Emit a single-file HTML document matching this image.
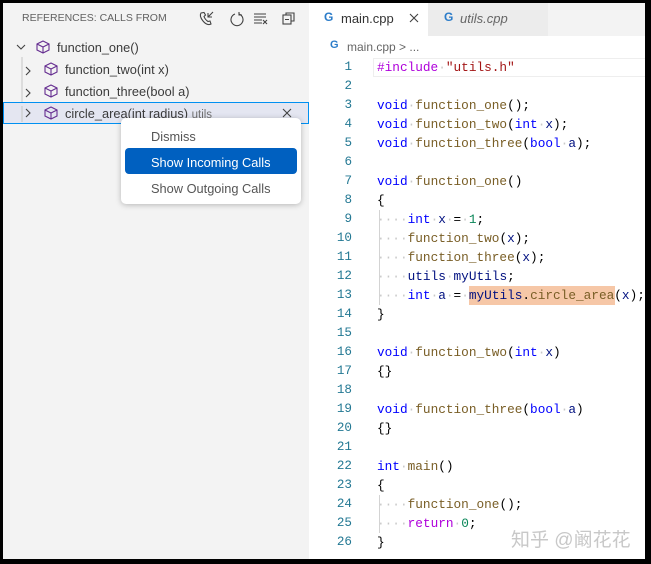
<!DOCTYPE html>
<html><head><meta charset="utf-8"><style>
*{margin:0;padding:0;box-sizing:border-box}
body{width:651px;height:564px;background:#000;position:relative;overflow:hidden;font-family:"Liberation Sans","Noto Sans CJK SC",sans-serif}
#side{position:absolute;left:3px;top:3px;width:306px;height:556px;background:#f3f3f3}
#ed{position:absolute;left:309px;top:3px;width:336px;height:556px;background:#fff}
.t{position:absolute;font-size:12.5px;color:#3b3b3b;white-space:nowrap}
.code{position:absolute;font-family:"Liberation Mono",monospace;font-size:12.75px;white-space:pre;color:#000;line-height:19px}
.ln{position:absolute;left:310px;width:42px;text-align:right;font-family:"Liberation Mono",monospace;font-size:12.6px;color:#237893;line-height:19px}
.k{color:#0000ff}.f{color:#795e26}.v{color:#001080}.s{color:#a31515}.p{color:#af00db}.n{color:#098658}.d{color:#c8c8c8}
svg{position:absolute}
</style></head><body>
<div id="side"></div>
<div id="ed"></div>
<div class="t" style="left:22px;top:12px;font-size:10.5px;color:#616161">REFERENCES: CALLS FROM</div>
<svg style="left:198px;top:10px" width="100" height="18" fill="none" stroke="#424242" stroke-width="1.1">
<path d="M3 3 q-2 3 2 8 q4 5 8 3 l-1-3 -2 0.5 q-3-2 -4-5 l1.5-1.5 -1.5-2.5z"/><path d="M15 2 l-5 5 M10 3 v4 h4"/>
<path d="M37 4 a6 6 0 1 0 4 0 M41 2 v3 h3"/>
<path d="M56 4 h12 M56 7 h12 M56 10 h8 M56 13 h8 M65 10 l4 4 M69 10 l-4 4"/>
<rect x="85" y="5" width="8" height="9"/><path d="M88 5 v-2 h8 v8 h-3 M87 9.5 h4"/>
</svg>
<svg style="left:16px;top:41px" width="40" height="80" fill="none" stroke="#424242" stroke-width="1.1">
<path d="M1 4 l4 4 4-4"/><path d="M10 26 l4 4 -4 4 M10 48 l4 4 -4 4 M10 70 l4 4 -4 4"/>
<path d="M6 16 v68" stroke="#c8c8c8"/>
</svg>
<svg style="left:36px;top:40px" width="20" height="14" fill="none" stroke="#652d90" stroke-width="1.1"><path d="M7 1 l6 3 v6 l-6 3 -6-3 v-6z M1 4 l6 3 6-3 M7 7 v6"/></svg>
<svg style="left:44px;top:62px" width="20" height="14" fill="none" stroke="#652d90" stroke-width="1.1"><path d="M7 1 l6 3 v6 l-6 3 -6-3 v-6z M1 4 l6 3 6-3 M7 7 v6"/></svg>
<svg style="left:44px;top:84px" width="20" height="14" fill="none" stroke="#652d90" stroke-width="1.1"><path d="M7 1 l6 3 v6 l-6 3 -6-3 v-6z M1 4 l6 3 6-3 M7 7 v6"/></svg>
<div class="t" style="left:57px;top:40px;font-size:12.8px">function_one()</div>
<div class="t" style="left:65px;top:62px;font-size:12.8px">function_two(int x)</div>
<div class="t" style="left:65px;top:84px;font-size:12.8px">function_three(bool a)</div>
<div style="position:absolute;left:3px;top:102px;width:306px;height:22px;background:#e4e6f1;border:1px solid #0090f1"></div>
<svg style="left:16px;top:106px" width="40" height="16" fill="none" stroke="#424242" stroke-width="1.1"><path d="M10 3 l4 4 -4 4"/><path d="M6 0 v16" stroke="#c8c8c8"/></svg>
<svg style="left:44px;top:106px" width="20" height="14" fill="none" stroke="#652d90" stroke-width="1.1"><path d="M7 1 l6 3 v6 l-6 3 -6-3 v-6z M1 4 l6 3 6-3 M7 7 v6"/></svg>
<div class="t" style="left:65px;top:106px;font-size:12.8px">circle_area(int radius) <span style="font-size:11.5px;color:#717171">utils</span></div>
<svg style="left:282px;top:108px" width="10" height="10" stroke="#424242" stroke-width="1.1"><path d="M1 1 l8 8 M9 1 l-8 8"/></svg>
<div style="position:absolute;left:121px;top:118px;width:180px;height:86px;background:#fff;border-radius:5px;box-shadow:0 1px 6px rgba(0,0,0,.25)"></div>
<div class="t" style="left:151px;top:129px;color:#555;font-size:12.8px">Dismiss</div>
<div style="position:absolute;left:125px;top:148px;width:172px;height:26px;background:#0060c0;border-radius:4px"></div>
<div class="t" style="left:151px;top:155px;color:#fff;font-size:12.8px">Show Incoming Calls</div>
<div class="t" style="left:151px;top:181px;color:#555;font-size:12.8px">Show Outgoing Calls</div>
<div style="position:absolute;left:309px;top:3px;width:336px;height:33px;background:#f3f3f3"></div>
<div style="position:absolute;left:309px;top:3px;width:119px;height:33px;background:#fff"></div>
<div style="position:absolute;left:428px;top:3px;width:120px;height:33px;background:#ececec"></div>
<div class="t" style="left:324px;top:10px;color:#2b7cc9;font-weight:bold;font-size:12px">G</div>
<div class="t" style="left:341px;top:11px;color:#333;font-size:13px">main.cpp</div>
<svg style="left:409px;top:13px" width="10" height="10" stroke="#424242" stroke-width="1.1"><path d="M1 1 l8 8 M9 1 l-8 8"/></svg>
<div class="t" style="left:444px;top:10px;color:#2b7cc9;font-weight:bold;font-size:12px">G</div>
<div class="t" style="left:460px;top:11px;color:#666;font-style:italic;font-size:13px">utils.cpp</div>
<div class="t" style="left:330px;top:39px;color:#2b7cc9;font-weight:bold;font-size:11px">G</div>
<div class="t" style="left:347px;top:40px;color:#666;font-size:12px">main.cpp &gt; ...</div>
<div style="position:absolute;left:373px;top:58px;width:272px;height:19px;border:1px solid #eee;border-right:none"></div>
<div style="position:absolute;left:469px;top:286px;width:146px;height:19px;background:#f6c7a7"></div>
<div style="position:absolute;left:379px;top:210px;width:1px;height:95px;background:#d3d3d3"></div>
<div style="position:absolute;left:379px;top:495px;width:1px;height:38px;background:#d3d3d3"></div>
<div class="ln" style="top:58px">1<br>2<br>3<br>4<br>5<br>6<br>7<br>8<br>9<br>10<br>11<br>12<br>13<br>14<br>15<br>16<br>17<br>18<br>19<br>20<br>21<br>22<br>23<br>24<br>25<br>26</div>
<div class="code" style="left:377px;top:58px"><span class="p">#include</span><span class="d">·</span><span class="s">"utils.h"</span>

<span class="k">void</span><span class="d">·</span><span class="f">function_one</span>();
<span class="k">void</span><span class="d">·</span><span class="f">function_two</span>(<span class="k">int</span><span class="d">·</span><span class="v">x</span>);
<span class="k">void</span><span class="d">·</span><span class="f">function_three</span>(<span class="k">bool</span><span class="d">·</span><span class="v">a</span>);

<span class="k">void</span><span class="d">·</span><span class="f">function_one</span>()
{
<span class="d">····</span><span class="k">int</span><span class="d">·</span><span class="v">x</span><span class="d">·</span>=<span class="d">·</span><span class="n">1</span>;
<span class="d">····</span><span class="f">function_two</span>(<span class="v">x</span>);
<span class="d">····</span><span class="f">function_three</span>(<span class="v">x</span>);
<span class="d">····</span><span class="v">utils</span><span class="d">·</span><span class="v">myUtils</span>;
<span class="d">····</span><span class="k">int</span><span class="d">·</span><span class="v">a</span><span class="d">·</span>=<span class="d">·</span><span class="v">myUtils</span>.<span class="f">circle_area</span>(<span class="v">x</span>);
}

<span class="k">void</span><span class="d">·</span><span class="f">function_two</span>(<span class="k">int</span><span class="d">·</span><span class="v">x</span>)
{}

<span class="k">void</span><span class="d">·</span><span class="f">function_three</span>(<span class="k">bool</span><span class="d">·</span><span class="v">a</span>)
{}

<span class="k">int</span><span class="d">·</span><span class="f">main</span>()
{
<span class="d">····</span><span class="f">function_one</span>();
<span class="d">····</span><span class="p">return</span><span class="d">·</span><span class="n">0</span>;
}</div>
<div class="t" style="left:511px;top:525px;font-size:19px;color:#c8c8c8">知乎 @阚花花</div>
</body></html>
